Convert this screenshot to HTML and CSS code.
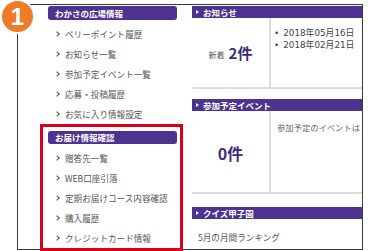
FILE: index.html
```html
<!DOCTYPE html>
<html>
<head>
  <title>マイページ メニュー</title>
  <link rel="stylesheet" href="styles.css">
</head>
<body>
  <div class="page">
    <span class="step-badge">1</span>
    <div class="frame">
      <div class="side">
        <div class="menu-group">
          <h3 class="menu-title">わかさの広場情報</h3>
          <ul class="menu-list">
            <li>ベリーポイント履歴</li>
            <li>お知らせ一覧</li>
            <li>参加予定イベント一覧</li>
            <li>応募・投稿履歴</li>
            <li>お気に入り情報設定</li>
          </ul>
        </div>
        <div class="menu-group is-marked">
          <h3 class="menu-title">お届け情報確認</h3>
          <ul class="menu-list">
            <li>贈答先一覧</li>
            <li>WEB口座引落</li>
            <li>定期お届けコース内容確認</li>
            <li>購入履歴</li>
            <li>クレジットカード情報</li>
          </ul>
        </div>
      </div>

      <div class="main">
        <div class="main-inner">
          <section class="panel">
            <h3 class="panel-title">お知らせ</h3>
            <div class="panel-body panel-news">
              <div class="panel-count">
                <span class="count-label">新着</span>
                <span class="count-num">2件</span>
              </div>
              <ul class="panel-info date-list">
                <li>2018年05月16日</li>
                <li>2018年02月21日</li>
              </ul>
            </div>
          </section>

          <section class="panel">
            <h3 class="panel-title">参加予定イベント</h3>
            <div class="panel-body panel-event">
              <div class="panel-count">
                <span class="count-num count-big">0件</span>
              </div>
              <p class="panel-info event-note">参加予定のイベントは</p>
            </div>
          </section>

          <section class="panel panel-quiz">
            <h3 class="panel-title">クイズ甲子園</h3>
            <p class="quiz-text">5月の月間ランキング</p>
          </section>
        </div>
      </div>
    </div>
  </div>
</body>
</html>
```

FILE: styles.css
```css
body {
  margin: 0;
  background: #fff;
  font-family: "Noto Sans CJK JP", sans-serif;
  color: #555;
}

.page {
  position: relative;
  width: 378px;
  height: 251px;
  overflow: hidden;
}

/* orange step number over the corner */
.step-badge {
  position: absolute;
  left: 0;
  top: -1px;
  width: 31px;
  height: 31px;
  border: 2px solid #fff;
  border-radius: 50%;
  background: #ee7b2a;
  color: #fff;
  font-family: "Liberation Sans", sans-serif;
  font-weight: bold;
  font-size: 24px;
  line-height: 31px;
  text-align: center;
  z-index: 2;
}

.frame {
  margin: 4px 0 0 17px;
  width: 344px;
  height: 244px;
  border: 1px solid #3a3a3a;
  display: flex;
}

/* left menu */
.side {
  width: 143px;
  margin-left: 22px;
  flex-shrink: 0;
}

.menu-group {
  padding: 0 6px 0 8px;
}

.menu-group.is-marked {
  border: 3px solid #d7001d;
  padding: 4px 3px 0 5px;
}

.menu-title {
  margin: 1px 0 4px;
  height: 14px;
  line-height: 14px;
  padding-left: 7px;
  background: #4d3290;
  border-radius: 3px;
  color: #fff;
  font-size: 8.5px;
  font-weight: bold;
}

.is-marked .menu-title {
  margin-top: 0;
  height: 13px;
  line-height: 13px;
}

.menu-list {
  list-style: none;
  margin: 0;
  padding: 0;
}

.menu-list li {
  height: 20px;
  line-height: 20px;
  padding-left: 17px;
  font-size: 8.6px;
  color: #555;
  position: relative;
  white-space: nowrap;
}

.menu-list li::before {
  content: "";
  position: absolute;
  left: 7px;
  top: 8px;
  width: 3px;
  height: 3px;
  border-top: 1px solid #555;
  border-right: 1px solid #555;
  transform: rotate(45deg);
}

/* right panels */
.main {
  flex: 1;
  margin-left: 9px;
  overflow: hidden;
}

.main-inner {
  width: 200px;
}

.panel-title {
  margin: 1px 0 0;
  height: 12px;
  line-height: 12px;
  padding-left: 11px;
  background: #4d3290;
  color: #fff;
  font-size: 8.5px;
  font-weight: bold;
  position: relative;
}

.panel-title::before {
  content: "";
  position: absolute;
  left: 4px;
  top: 4px;
  border-left: 3px solid #fff;
  border-top: 2px solid transparent;
  border-bottom: 2px solid transparent;
}

.panel-body {
  display: flex;
  border-bottom: 2px solid #ddd;
}

.panel-news {
  height: 69px;
}

.panel-event {
  height: 81px;
}

.panel + .panel .panel-title {
  margin-top: 10px;
}

.panel-quiz .panel-title,
.panel + .panel-quiz .panel-title {
  margin-top: 13px;
}

.panel-count {
  width: 77px;
  flex-shrink: 0;
  border-right: 2px solid #ddd;
  display: flex;
  align-items: center;
  justify-content: center;
  gap: 4px;
}

.count-label {
  font-size: 8px;
  color: #555;
  margin-top: 3px;
}

.count-num {
  font-size: 15px;
  font-weight: bold;
  color: #3f2a7e;
}

.count-big {
  font-size: 16px;
  margin-top: 2px;
}

.panel-info {
  margin: 0;
  padding: 9px 0 0 3px;
}

.date-list {
  list-style: none;
}

.date-list li {
  line-height: 12px;
  font-family: "DejaVu Sans", "Noto Sans CJK JP", sans-serif;
  font-size: 8.8px;
  color: #444;
  white-space: nowrap;
}

.date-list li::before {
  content: "•";
  margin-right: 4px;
}

.event-note {
  padding: 10px 0 0 6px;
  line-height: 12px;
  font-size: 8.3px;
  color: #666;
  white-space: nowrap;
}

.quiz-text {
  margin: 0;
  padding: 12px 0 0 6px;
  line-height: 12px;
  font-size: 8.6px;
  color: #555;
}
```
